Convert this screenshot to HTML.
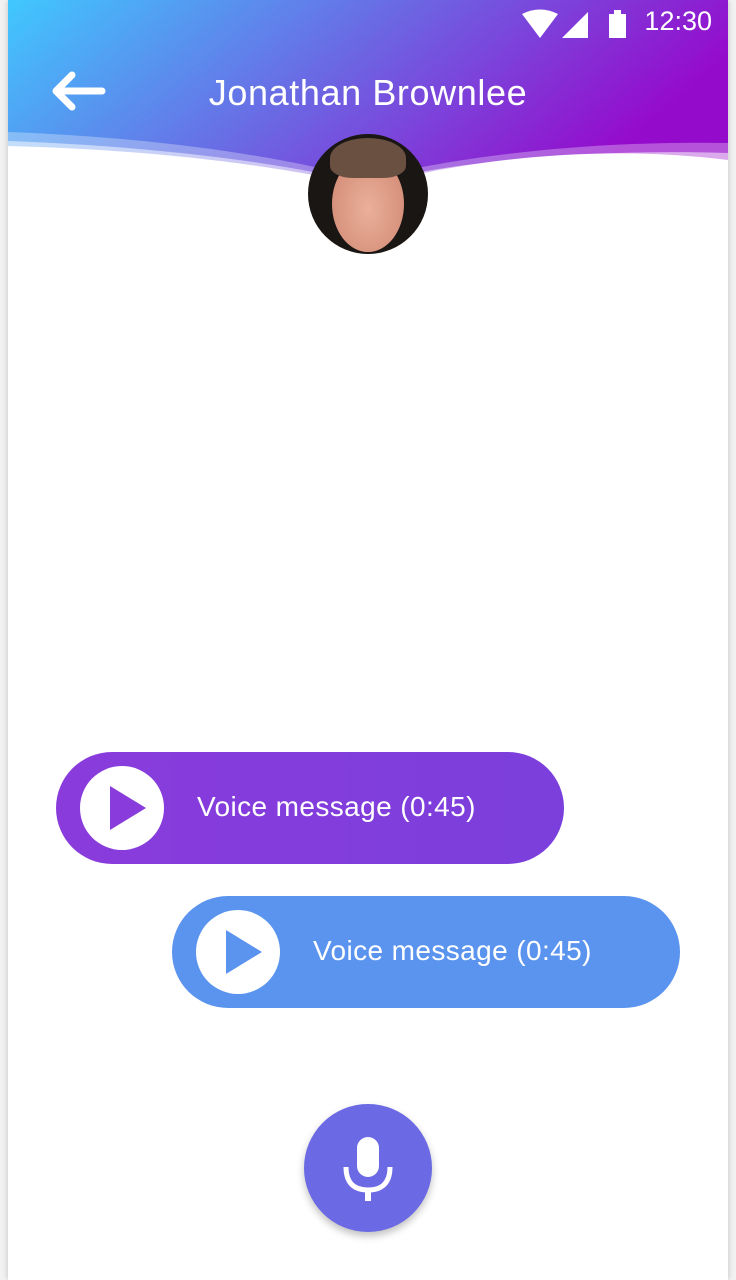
<!DOCTYPE html>
<html><head><style>
body{margin:0;width:736px;height:1280px;background:#f2f2f2;overflow:hidden;font-family:"Liberation Sans",sans-serif}
.card{position:absolute;left:8px;top:0;width:720px;height:1280px;background:#fff;box-shadow:0 0 6px rgba(0,0,0,.2);overflow:hidden}
.hdr{position:absolute;left:0;top:0;width:720px;height:200px}
.title{position:absolute;left:0;width:720px;top:72px;text-align:center;color:#fff;font-size:36px;letter-spacing:0.6px}
.time{position:absolute;right:16px;top:6px;color:#fff;font-size:27px}
.av{position:absolute;left:300px;top:134px;width:120px;height:120px;border-radius:50%;background:#1a1614;overflow:hidden}
.face{position:absolute;left:24px;top:22px;width:72px;height:96px;border-radius:50%;background:radial-gradient(ellipse at 50% 55%,#eab09a 0,#d48d78 80%,#8a5a48 100%)}
.hair{position:absolute;left:22px;top:4px;width:76px;height:40px;border-radius:50% 50% 30% 30%;background:#6a5040}
.bub{position:absolute;height:112px;width:508px;border-radius:56px;color:#fff;font-size:28px}
.bub .pc{position:absolute;left:24px;top:14px;width:84px;height:84px;border-radius:50%;background:#fff}
.bub span{position:absolute;left:141px;top:39px;letter-spacing:0.4px}
.mic{position:absolute;left:296px;top:1104px;width:128px;height:128px;border-radius:50%;background:#6b69e4;box-shadow:0 4px 8px rgba(0,0,0,.25)}
</style></head><body>
<div class="card">
<svg class="hdr" viewBox="0 0 720 200">
<defs><linearGradient id="g" x1="0" y1="0" x2="1" y2="0.3"><stop offset="0" stop-color="#40c8fe"/><stop offset=".5" stop-color="#6a6ae4"/><stop offset="1" stop-color="#950bcc"/></linearGradient></defs>
<path d="M0 0H720V160C560 140 420 170 360 186C280 168 160 150 0 146Z" fill="url(#g)"/>
<path d="M0 132C160 138 280 158 360 180C420 162 560 140 720 143V160C560 156 420 170 360 192C280 172 160 158 0 152Z" fill="#fff" opacity=".3"/>
<path d="M0 141C160 147 280 164 360 184C420 166 560 148 720 153V160C560 156 420 170 360 192C280 172 160 158 0 152Z" fill="#fff" opacity=".5"/>
<path d="M0 152C160 158 280 172 360 192C420 170 560 156 720 163V200H0Z" fill="#fff"/>
<path d="M48 91H94M48 91L64 75M48 91L64 107" stroke="#fff" stroke-width="7" stroke-linecap="round" fill="none"/>
<path d="M514 14Q532 5 550 14L532 38Z" fill="#fff"/>
<path d="M554 38H580V12Z" fill="#fff"/>
<rect x="601" y="14" width="17" height="24" fill="#fff"/><rect x="606" y="10" width="7" height="5" fill="#fff"/>
</svg>
<div class="time">12:30</div>
<div class="title">Jonathan Brownlee</div>
<div class="av"><div class="face"></div><div class="hair"></div></div>
<div class="bub" style="left:48px;top:752px;background:linear-gradient(90deg,#8a3bdc,#7b3fdc)"><div class="pc"></div><svg style="position:absolute;left:52px;top:34px" width="40" height="44"><path d="M2 0L38 22 2 44Z" fill="#8a3bdc"/></svg><span>Voice message (0:45)</span></div>
<div class="bub" style="left:164px;top:896px;background:#5b94ee"><div class="pc"></div><svg style="position:absolute;left:52px;top:34px" width="40" height="44"><path d="M2 0L38 22 2 44Z" fill="#5b94ee"/></svg><span>Voice message (0:45)</span></div>
<div class="mic"><svg width="128" height="128"><rect x="53" y="33" width="22" height="40" rx="11" fill="#fff"/><path d="M42 63Q42 86 64 86Q86 86 86 63" stroke="#fff" stroke-width="5" fill="none"/><rect x="61" y="85" width="6" height="12" fill="#fff"/></svg></div>
</div>
</body></html>
